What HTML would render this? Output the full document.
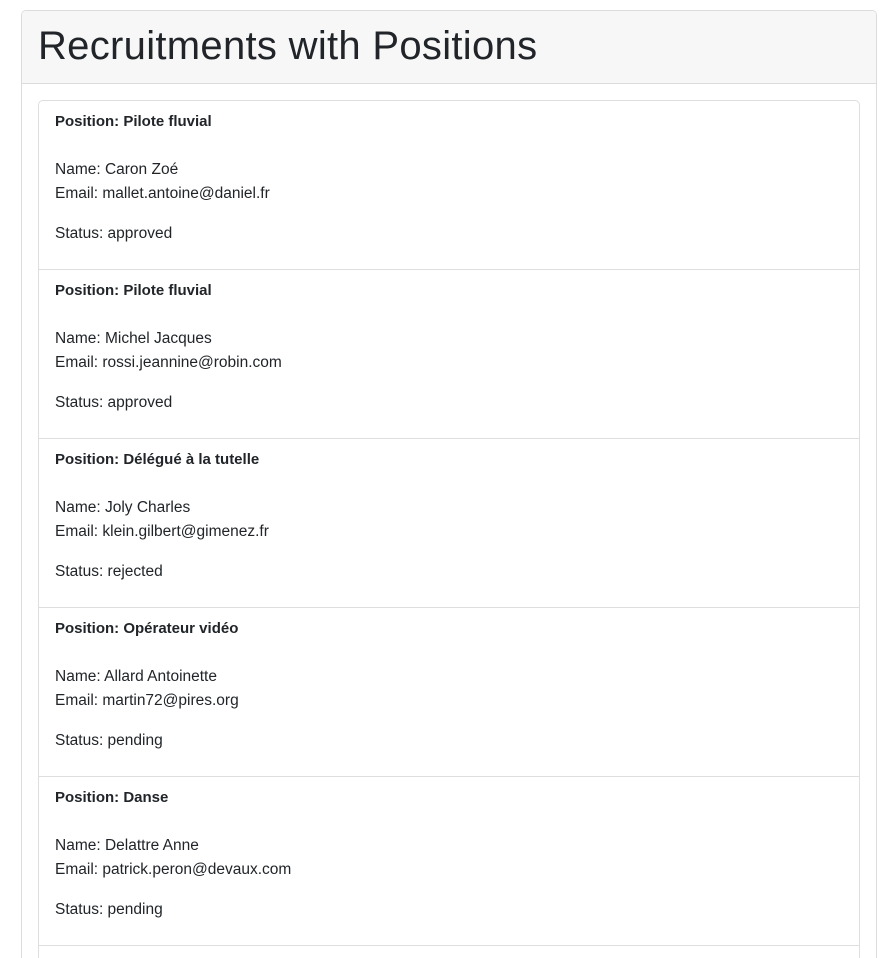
<!DOCTYPE html>
<html><head><meta charset="utf-8"><style>
html,body{margin:0;height:958px;overflow:hidden;background:#fff;font-family:"Liberation Sans",sans-serif;color:#212529;}
.card{position:absolute;left:21px;top:10px;width:854px;height:947px;border:1px solid #dcdcdc;border-bottom:none;border-radius:5px 5px 0 0;overflow:hidden}
.hd{height:72px;background:#f7f7f7;border-bottom:1px solid #dcdcdc;}
.hd h1{margin:0;padding-left:16px;font-size:40px;font-weight:normal;line-height:70px;letter-spacing:0.3px}
.list{position:absolute;left:16px;top:89px;width:820px;height:860px;border:1px solid #dedede;border-bottom:none;border-radius:5px 5px 0 0;overflow:hidden}
.it{height:169px;border-bottom:1px solid #dedede;box-sizing:border-box;padding:9px 16px;font-size:15.5px}
.it b{display:block;line-height:24px;height:24px;font-size:15px}
.n{margin-top:24px;line-height:24px}
.s{margin-top:16px;line-height:24px}
</style></head><body>
<div class="card"><div class="hd"><h1>Recruitments with Positions</h1></div>
<div class="list">
<div class="it"><b>Position: Pilote fluvial</b><div class="n">Name: Caron Zoé<br>Email: mallet.antoine@daniel.fr</div><div class="s">Status: approved</div></div>
<div class="it"><b>Position: Pilote fluvial</b><div class="n">Name: Michel Jacques<br>Email: rossi.jeannine@robin.com</div><div class="s">Status: approved</div></div>
<div class="it"><b>Position: Délégué à la tutelle</b><div class="n">Name: Joly Charles<br>Email: klein.gilbert@gimenez.fr</div><div class="s">Status: rejected</div></div>
<div class="it"><b>Position: Opérateur vidéo</b><div class="n">Name: Allard Antoinette<br>Email: martin72@pires.org</div><div class="s">Status: pending</div></div>
<div class="it"><b>Position: Danse</b><div class="n">Name: Delattre Anne<br>Email: patrick.peron@devaux.com</div><div class="s">Status: pending</div></div>
</div></div>
</body></html>
